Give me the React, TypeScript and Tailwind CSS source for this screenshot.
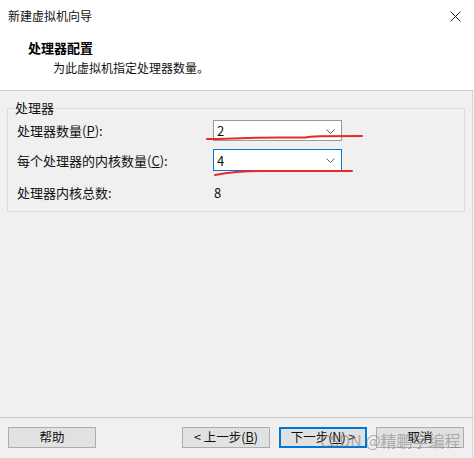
import React from "react";

const font = { fontFamily: '"Noto Sans CJK SC", "Noto Sans", sans-serif' };

function Combo({ value, focused }: { value: string; focused?: boolean }) {
  return (
    <div
      className={`flex h-full w-[129px] items-center justify-between bg-white pl-[3px] pr-[6px] text-[13px] text-[#111] ${
        focused ? "border border-[#0078d7]" : "border border-[#9a9a9a]"
      }`}
    >
      <span className="leading-none">{value}</span>
      <svg width="9" height="5" viewBox="0 0 9 5" className="mt-[1px]">
        <path d="M0.5 0.5 L4.5 4.5 L8.5 0.5" fill="none" stroke="#606060" strokeWidth="1" />
      </svg>
    </div>
  );
}

function Btn({ children, primary }: { children: React.ReactNode; primary?: boolean }) {
  return (
    <div
      className={`flex h-[21px] w-[88px] items-center justify-center bg-[#e1e1e1] text-[12.5px] leading-none text-[#111] ${
        primary ? "border-2 border-[#0078d7]" : "border border-[#adadad]"
      }`}
    >
      {children}
    </div>
  );
}

export default function App() {
  return (
    <div className="relative h-[458px] w-[474px] overflow-hidden bg-[#f0f0f0]" style={font}>
      {/* header */}
      <div className="h-[91px] border-b border-[#d0d0d0] bg-white">
        <div className="flex h-[32px] items-center justify-between pl-[8px] pr-[13px]">
          <span className="text-[12px] leading-none text-[#111]">新建虚拟机向导</span>
          <svg width="11" height="11" viewBox="0 0 11 11">
            <path d="M0.5 0.5 L10.5 10.5 M10.5 0.5 L0.5 10.5" stroke="#222" strokeWidth="1" />
          </svg>
        </div>
        <div className="pl-[28px] pt-[8px] text-[13px] font-bold leading-[16px] text-black">处理器配置</div>
        <div className="pl-[53px] pt-[4px] text-[12px] leading-[16px] text-[#111]">为此虚拟机指定处理器数量。</div>
      </div>

      {/* group box */}
      <div className="relative mx-[7px] mt-[17px] h-[104px] w-[458px] border border-[#dcdcdc]">
        <div className="absolute -top-[10px] left-[5px] bg-[#f0f0f0] px-[2px] text-[13px] leading-[18px] text-[#111]">
          处理器
        </div>
        <div className="grid grid-cols-[196px_129px] items-center pl-[9px] pt-[11px] text-[13px] text-[#111]">
          <div className="flex h-[21px] items-center leading-none">
            处理器数量(<span className="underline">P</span>):
          </div>
          <div className="h-[21px]">
            <Combo value="2" />
          </div>
          <div className="mt-[8px] flex h-[22px] items-center leading-none">
            每个处理器的内核数量(<span className="underline">C</span>):
          </div>
          <div className="mt-[8px] h-[22px]">
            <Combo value="4" focused />
          </div>
          <div className="mt-[11px] flex h-[20px] items-center leading-none">处理器内核总数:</div>
          <div className="mt-[11px] flex h-[20px] items-center pl-[1px] leading-none">8</div>
        </div>
      </div>

      {/* bottom */}
      <div className="absolute bottom-0 left-0 right-0 h-[41px] border-t border-[#c8c8c8]">
        <div className="flex items-center px-[8px] pt-[9px]">
          <Btn>帮助</Btn>
          <div className="flex-1" />
          <div className="flex gap-[9px] pr-[2px]">
            <Btn>
              &lt; 上一步(<span className="underline">B</span>)
            </Btn>
            <Btn primary>
              下一步(<span className="underline">N</span>) &gt;
            </Btn>
            <Btn>取消</Btn>
          </div>
        </div>
      </div>

      {/* right window edge */}
      <div className="absolute bottom-0 right-[1px] top-[91px] w-px bg-[#d8d8d8]" />

      {/* red annotations */}
      <svg className="pointer-events-none absolute left-0 top-0" width="474" height="458">
        <path
          d="M207 139 C 230 139, 240 137.5, 280 137.5 L 306 137.5 C 310 136, 320 136, 362 136"
          fill="none"
          stroke="#e8282b"
          strokeWidth="2"
          strokeLinecap="round"
        />
        <path
          d="M215 175 C 225 173, 240 171, 260 171 L 352 171"
          fill="none"
          stroke="#e8282b"
          strokeWidth="2"
          strokeLinecap="round"
        />
      </svg>

      {/* watermark */}
      <div
        className="pointer-events-none absolute left-[320px] top-[430px] whitespace-nowrap text-[16px] leading-[20px] text-[rgba(120,120,120,0.55)]"
        style={font}
      >
        CSDN @精鹏学编程
      </div>
    </div>
  );
}
